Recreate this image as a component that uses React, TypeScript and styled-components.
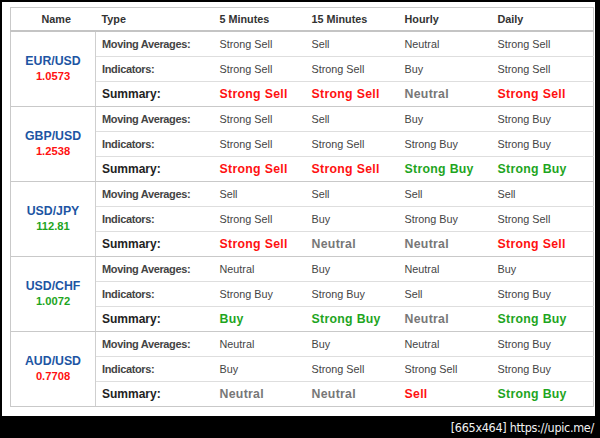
import React from "react";
import styled, { createGlobalStyle } from "styled-components";

const Global = createGlobalStyle`
  html, body { margin: 0; padding: 0; background: #000; }
  body { width: 600px; height: 438px; overflow: hidden; font-family: "Liberation Sans", Arial, sans-serif; }
`;

const Frame = styled.div`
  width: 600px;
  height: 438px;
  background: #000;
  display: flex;
  flex-direction: column;
`;

const Panel = styled.div`
  margin: 2px 0 0 2px;
  width: 593px;
  height: 414px;
  background: #fff;
  padding: 5px 0 0 8px;
  box-sizing: border-box;
`;

const Footer = styled.div`
  flex: 1;
  display: flex;
  align-items: center;
  justify-content: flex-end;
  padding-right: 6px;
  color: #f2f2f2;
  font-family: "DejaVu Sans Condensed", "Liberation Sans", sans-serif;
  font-size: 12.5px;
  letter-spacing: -0.3px;
`;

const Table = styled.table`
  border-collapse: collapse;
  table-layout: fixed;
  width: 583px;
  border: 1px solid #c9c9c9;
`;

const HeadCell = styled.th<{ $center?: boolean }>`
  height: 23px;
  padding: 0 0 0 6px;
  text-align: ${(p) => (p.$center ? "center" : "left")};
  font-size: 10.8px;
  font-weight: bold;
  color: #333;
  border-bottom: 2px solid #c4c4c4;
  box-sizing: border-box;
`;

const Row = styled.tr<{ $last?: boolean }>`
  td {
    border-bottom: 1px solid ${(p) => (p.$last ? "#c9c9c9" : "#dedede")};
  }
`;

const NameCell = styled.td`
  text-align: center;
  vertical-align: middle;
  border-right: 1px solid #cfcfcf;
  border-bottom: 1px solid #c9c9c9 !important;
  padding: 0 0 1px;
`;

const Pair = styled.div`
  font-size: 12.3px;
  font-weight: bold;
  color: #1d55a3;
  line-height: 15px;
`;

const Price = styled.div<{ $up?: boolean }>`
  font-size: 11.2px;
  font-weight: bold;
  color: ${(p) => (p.$up ? "#1ea51e" : "#ff1111")};
  line-height: 14px;
`;

const TypeCell = styled.td<{ $summary?: boolean }>`
  height: 24px;
  padding: 0 0 0 6px;
  font-weight: bold;
  white-space: nowrap;
  font-size: ${(p) => (p.$summary ? "12px" : "11px")};
  letter-spacing: ${(p) => (p.$summary ? "0" : "-0.35px")};
  color: ${(p) => (p.$summary ? "#222" : "#444")};
`;

type Tone = "Strong Sell" | "Sell" | "Neutral" | "Buy" | "Strong Buy";

const toneColor = (t: Tone) =>
  t === "Strong Sell" || t === "Sell"
    ? "#ff1111"
    : t === "Neutral"
    ? "#777"
    : "#1ea51e";

const ValueCell = styled.td<{ $summary?: boolean; $tone: Tone }>`
  height: 24px;
  padding: 0 0 0 6px;
  white-space: nowrap;
  font-size: ${(p) => (p.$summary ? "12.3px" : "10.8px")};
  font-weight: ${(p) => (p.$summary ? "bold" : "normal")};
  letter-spacing: ${(p) => (p.$summary ? "0.3px" : "0")};
  color: ${(p) => (p.$summary ? toneColor(p.$tone) : "#444")};
`;

type Group = {
  pair: string;
  price: string;
  up: boolean;
  ma: Tone[];
  ind: Tone[];
  sum: Tone[];
};

const groups: Group[] = [
  {
    pair: "EUR/USD",
    price: "1.0573",
    up: false,
    ma: ["Strong Sell", "Sell", "Neutral", "Strong Sell"],
    ind: ["Strong Sell", "Strong Sell", "Buy", "Strong Sell"],
    sum: ["Strong Sell", "Strong Sell", "Neutral", "Strong Sell"],
  },
  {
    pair: "GBP/USD",
    price: "1.2538",
    up: false,
    ma: ["Strong Sell", "Sell", "Buy", "Strong Buy"],
    ind: ["Strong Sell", "Strong Sell", "Strong Buy", "Strong Buy"],
    sum: ["Strong Sell", "Strong Sell", "Strong Buy", "Strong Buy"],
  },
  {
    pair: "USD/JPY",
    price: "112.81",
    up: true,
    ma: ["Sell", "Sell", "Sell", "Sell"],
    ind: ["Strong Sell", "Buy", "Strong Buy", "Strong Sell"],
    sum: ["Strong Sell", "Neutral", "Neutral", "Strong Sell"],
  },
  {
    pair: "USD/CHF",
    price: "1.0072",
    up: true,
    ma: ["Neutral", "Buy", "Neutral", "Buy"],
    ind: ["Strong Buy", "Strong Buy", "Sell", "Strong Buy"],
    sum: ["Buy", "Strong Buy", "Neutral", "Strong Buy"],
  },
  {
    pair: "AUD/USD",
    price: "0.7708",
    up: false,
    ma: ["Neutral", "Buy", "Neutral", "Strong Buy"],
    ind: ["Buy", "Strong Sell", "Strong Sell", "Strong Buy"],
    sum: ["Neutral", "Neutral", "Sell", "Strong Buy"],
  },
];

export default function App() {
  return (
    <Frame>
      <Global />
      <Panel>
        <Table>
          <colgroup>
            <col style={{ width: 85 }} />
            <col style={{ width: 118 }} />
            <col style={{ width: 92 }} />
            <col style={{ width: 93 }} />
            <col style={{ width: 93 }} />
            <col style={{ width: 102 }} />
          </colgroup>
          <thead>
            <tr>
              <HeadCell $center>Name</HeadCell>
              <HeadCell>Type</HeadCell>
              <HeadCell>5 Minutes</HeadCell>
              <HeadCell>15 Minutes</HeadCell>
              <HeadCell>Hourly</HeadCell>
              <HeadCell>Daily</HeadCell>
            </tr>
          </thead>
          <tbody>
            {groups.map((g) => (
              <React.Fragment key={g.pair}>
                <Row>
                  <NameCell rowSpan={3}>
                    <Pair>{g.pair}</Pair>
                    <Price $up={g.up}>{g.price}</Price>
                  </NameCell>
                  <TypeCell>Moving Averages:</TypeCell>
                  {g.ma.map((v, i) => (
                    <ValueCell key={i} $tone={v}>
                      {v}
                    </ValueCell>
                  ))}
                </Row>
                <Row>
                  <TypeCell>Indicators:</TypeCell>
                  {g.ind.map((v, i) => (
                    <ValueCell key={i} $tone={v}>
                      {v}
                    </ValueCell>
                  ))}
                </Row>
                <Row $last>
                  <TypeCell $summary>Summary:</TypeCell>
                  {g.sum.map((v, i) => (
                    <ValueCell key={i} $tone={v} $summary>
                      {v}
                    </ValueCell>
                  ))}
                </Row>
              </React.Fragment>
            ))}
          </tbody>
        </Table>
      </Panel>
      <Footer>[665x464] https://upic.me/</Footer>
    </Frame>
  );
}
